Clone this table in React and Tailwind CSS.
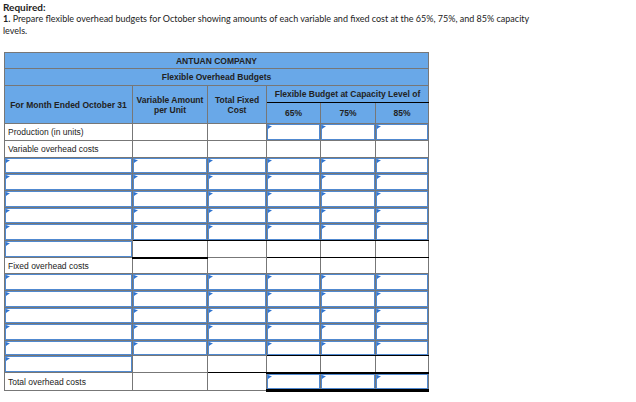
const GRID = 'border border-[#777777]'
const INPUT = 'relative shadow-[inset_0_0_0_1px_#5089d0]'

function Flag() {
  return (
    <svg className="absolute left-[1px] top-[1px]" width="4" height="5" viewBox="0 0 4 5">
      <polygon points="0,0 4,1.5 2,2.5 0,4" fill="#2f74d0" />
    </svg>
  )
}

// l = label, i = input cell, b = blank cell; "below" adds the black rules under a row
const row6 = ['i', 'i', 'i', 'i', 'i', 'i']

const BODY = [
  { h: 17, label: 'Production (in units)', cells: ['l', 'b', 'b', 'i', 'i', 'i'] },
  { h: 17, label: 'Variable overhead costs', cells: ['l', 'b', 'b', 'b', 'b', 'b'] },
  { h: 16, cells: row6 },
  { h: 17, cells: row6 },
  { h: 17, cells: row6 },
  { h: 16, cells: row6 },
  { h: 17, cells: row6, below: ['', 'border-b-black', 'border-b-black', 'border-b-black', 'border-b-black', 'border-b-black'] },
  { h: 17, cells: ['i', 'b', 'b', 'b', 'b', 'b'], below: ['', 'border-b-2 border-b-black', '', 'border-b-black', 'border-b-black', 'border-b-black'] },
  { h: 16, label: 'Fixed overhead costs', cells: ['l', 'b', 'b', 'b', 'b', 'b'] },
  { h: 17, cells: row6 },
  { h: 17, cells: row6 },
  { h: 16, cells: row6 },
  { h: 17, cells: row6 },
  { h: 15, cells: row6, below: ['', '', '', 'border-b-black', 'border-b-black', 'border-b-black'] },
  { h: 17, cells: ['i', 'b', 'b', 'b', 'b', 'b'], below: ['', '', 'border-b-black', 'border-b-2 border-b-black', 'border-b-2 border-b-black', 'border-b-2 border-b-black'] },
  { h: 18, label: 'Total overhead costs', cells: ['l', 'b', 'b', 'i', 'i', 'i'], below: ['', '', '', 'border-b-[3px] border-b-black', 'border-b-[3px] border-b-black', 'border-b-[3px] border-b-black'] },
]

export default function App() {
  return (
    <div className="w-[636px] h-[402px] bg-white text-[#222222] font-['Liberation_Sans',Arial,sans-serif]">
      <div className="pl-[3px] pt-[1px] w-[600px] font-['Lato',sans-serif]">
        <p className="font-bold text-[10px] leading-[12px]">Required:</p>
        <p className="text-[9px] leading-[12px]">
          <span className="font-bold">1.</span> Prepare flexible overhead budgets for October showing amounts of each variable and fixed cost at the 65%, 75%, and 85% capacity
          <br />
          levels.
        </p>
      </div>

      <table className="ml-[4px] mt-[15px] table-fixed border-collapse text-[8.5px] leading-[10px]">
        <colgroup>
          <col className="w-[128px]" />
          <col className="w-[75px]" />
          <col className="w-[59px]" />
          <col className="w-[54px]" />
          <col className="w-[55px]" />
          <col className="w-[53px]" />
        </colgroup>
        <thead className="bg-[#69a8e8] font-bold text-center">
          <tr className="h-[16px]">
            <th colSpan={6} className={GRID}>ANTUAN COMPANY</th>
          </tr>
          <tr className="h-[17px]">
            <th colSpan={6} className={GRID}>Flexible Overhead Budgets</th>
          </tr>
          <tr className="h-[17px]">
            <th rowSpan={2} className={`${GRID} px-0`}>For Month Ended October 31</th>
            <th rowSpan={2} className={`${GRID} px-0`}>Variable Amount per Unit</th>
            <th rowSpan={2} className={`${GRID} px-[4px]`}>Total Fixed Cost</th>
            <th colSpan={3} className={`${GRID} border-b-black`}>Flexible Budget at Capacity Level of</th>
          </tr>
          <tr className="h-[21px]">
            <th className={GRID}>65%</th>
            <th className={GRID}>75%</th>
            <th className={GRID}>85%</th>
          </tr>
        </thead>
        <tbody>
          {BODY.map((r, ri) => (
            <tr key={ri} style={{ height: r.h }}>
              {r.cells.map((c, ci) => {
                const extra = r.below ? r.below[ci] : ''
                if (c === 'l')
                  return <td key={ci} className={`${GRID} ${extra} px-[3px] text-left`}>{r.label}</td>
                if (c === 'i')
                  return (
                    <td key={ci} className={`${GRID} ${extra} ${INPUT}`}>
                      <Flag />
                    </td>
                  )
                return <td key={ci} className={`${GRID} ${extra}`} />
              })}
            </tr>
          ))}
        </tbody>
      </table>
    </div>
  )
}
